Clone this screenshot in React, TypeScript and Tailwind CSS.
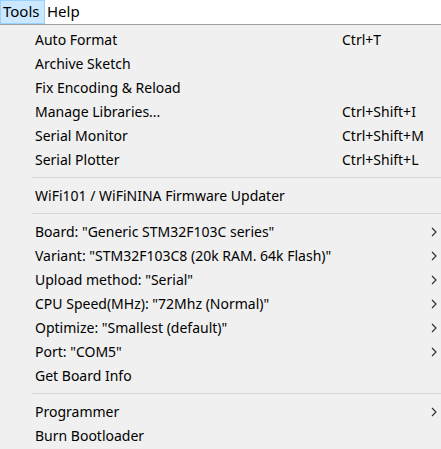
import React from "react";

type Item =
  | { type: "sep" }
  | { type: "item"; label: string; shortcut?: string; sub?: boolean };

const items: Item[] = [
  { type: "item", label: "Auto Format", shortcut: "Ctrl+T" },
  { type: "item", label: "Archive Sketch" },
  { type: "item", label: "Fix Encoding & Reload" },
  { type: "item", label: "Manage Libraries...", shortcut: "Ctrl+Shift+I" },
  { type: "item", label: "Serial Monitor", shortcut: "Ctrl+Shift+M" },
  { type: "item", label: "Serial Plotter", shortcut: "Ctrl+Shift+L" },
  { type: "sep" },
  { type: "item", label: "WiFi101 / WiFiNINA Firmware Updater" },
  { type: "sep" },
  { type: "item", label: 'Board: "Generic STM32F103C series"', sub: true },
  { type: "item", label: 'Variant: "STM32F103C8 (20k RAM. 64k Flash)"', sub: true },
  { type: "item", label: 'Upload method: "Serial"', sub: true },
  { type: "item", label: 'CPU Speed(MHz): "72Mhz (Normal)"', sub: true },
  { type: "item", label: 'Optimize: "Smallest (default)"', sub: true },
  { type: "item", label: 'Port: "COM5"', sub: true },
  { type: "item", label: "Get Board Info" },
  { type: "sep" },
  { type: "item", label: "Programmer", sub: true },
  { type: "item", label: "Burn Bootloader" },
];

function Chevron() {
  return (
    <svg width="6" height="10" viewBox="0 0 6 10" className="block">
      <path d="M1 1 L5 5 L1 9" fill="none" stroke="#333" strokeWidth="1.2" />
    </svg>
  );
}

export default function App() {
  return (
    <div className="w-[441px] h-[449px] overflow-hidden bg-[#f0f0f0] text-black text-[14px] leading-none font-['Noto_Sans','Open_Sans',sans-serif]">
      <div className="h-[25px] bg-white border-b border-[#a0a0a0] flex items-stretch text-[15px]">
        <div className="w-[45px] h-[24px] bg-[#cce8ff] border border-[#99d1ff] flex items-center pl-[2px] pb-[1px]">
          Tools
        </div>
        <div className="flex items-center pl-[2px] pb-[1px]">Help</div>
      </div>
      <div className="pt-[3px]">
        {items.map((it, i) =>
          it.type === "sep" ? (
            <div key={i} className="h-[12px] pl-[32px] pt-[5px]">
              <div className="h-px bg-[#d7d7d7]" />
            </div>
          ) : (
            <div key={i} className="h-[24px] flex items-center pl-[35px] pb-[1px]">
              <div className="flex-1 whitespace-nowrap">{it.label}</div>
              <div className="w-[85px] whitespace-nowrap">{it.shortcut ?? ""}</div>
              <div className="w-[14px] flex justify-center">{it.sub ? <Chevron /> : null}</div>
            </div>
          )
        )}
      </div>
    </div>
  );
}
